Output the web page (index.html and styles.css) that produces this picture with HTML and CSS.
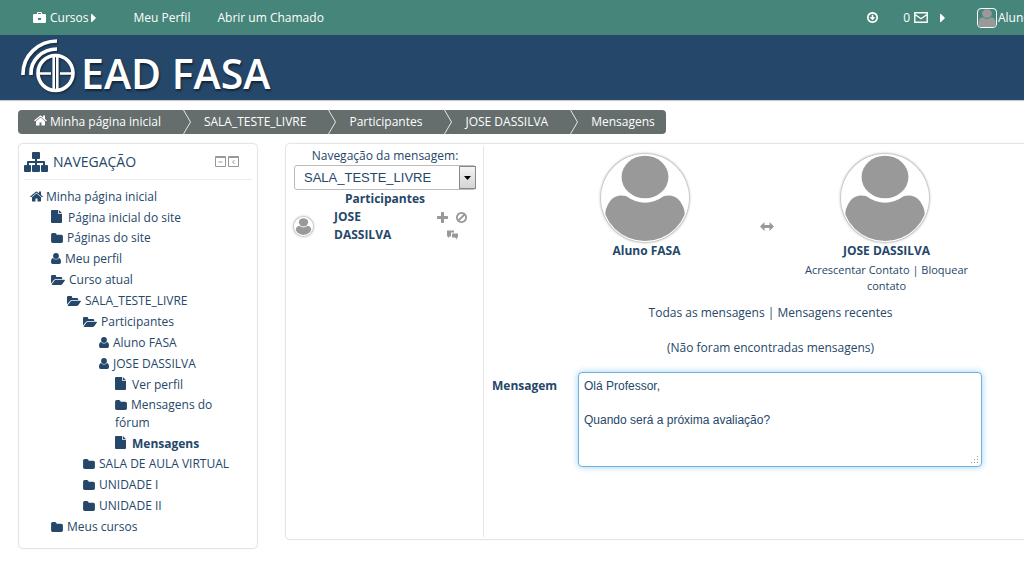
FILE: index.html
```html
<!DOCTYPE html>
<html lang="pt-BR">
<head>
<meta charset="utf-8">
<meta name="viewport" content="width=device-width, initial-scale=1">
<title>EAD FASA: Mensagens</title>
<link rel="stylesheet" href="styles.css">
</head>
<body>
<svg class="symbols" aria-hidden="true">
  <symbol id="home" viewBox="64 200 1664 1400"><path d="M1472 992v480q0 26-19 45t-45 19h-384v-384h-256v384h-384q-26 0-45-19t-19-45v-480q0-1 .5-3t.5-3l575-474 575 474q1 2 1 6zm223-69l-62 74q-8 9-21 11h-3q-13 0-21-7l-692-577-692 577q-12 8-24 7-13-2-21-11l-62-74q-8-10-7-23.5t11-21.5l719-599q32-26 76-26t76 26l244 204v-195q0-14 9-23t23-9h192q14 0 23 9t9 23v408l219 182q10 8 11 21.5t-7 23.5z"/></symbol>
  <symbol id="folder" viewBox="64 128 1664 1408"><path d="M1728 608v704q0 92-66 158t-158 66h-1216q-92 0-158-66t-66-158v-960q0-92 66-158t158-66h320q92 0 158 66t66 158v32h672q92 0 158 66t66 158z"/></symbol>
  <symbol id="folder-open" viewBox="0 0 14 10"><path d="M0 1.200Q0 0 1.200 0H4q1.200 0 1.200 1.200V2H10q1.200 0 1.200 1.200V4H5.200Q3.800 4 2.900 5L0 8.500zM5 4.800h8.400q.9.200.3 1L11.400 9q-.8 1-1.800 1H1.200q-.8-.2-.3-.9L3.500 5.600Q4.200 4.800 5 4.800z"/></symbol>
  <symbol id="file" viewBox="0 0 11 13"><path d="M1 0h6v3.200q0 .8.8.8H11v8q0 1-1 1H1q-1 0-1-1V1q0-1 1-1zM7.800 0L11 3.200H7.800z"/></symbol>
  <symbol id="user" viewBox="0 0 10 11"><ellipse cx="5" cy="3" rx="2.900" ry="3"/><path d="M2 5Q3.300 6.500 5 6.500T8 5Q10 5.400 10 9q0 2-1.700 2H1.700Q0 11 0 9 0 5.400 2 5z"/></symbol>
  <symbol id="plus" viewBox="192 128 1408 1408"><path d="M1600 736v192q0 40-28 68t-68 28h-416v416q0 40-28 68t-68 28h-192q-40 0-68-28t-28-68v-416h-416q-40 0-68-28t-28-68v-192q0-40 28-68t68-28h416v-416q0-40 28-68t68-28h192q40 0 68 28t28 68v416h416q40 0 68 28t28 68z"/></symbol>
  <symbol id="ban" viewBox="0 0 11 11"><path d="M2.500 8.500l6-6" stroke="currentColor" stroke-width="1.800"/><path d="M5.500 0a5.500 5.500 0 1 0 .01 0zM5.500 1.800a3.700 3.700 0 1 1-.01 0z" fill-rule="evenodd"/></symbol>
  <symbol id="comments" viewBox="0 0 11 10"><path d="M0 0h7v2H4v4H2.500L1 7.500V6H0zM5 3h6v4h-1v2L8 7H5z"/></symbol>
  <symbol id="swap" viewBox="0 0 14 9"><path d="M0 4.500L4.500 0v3h5V0L14 4.500 9.500 9V6h-5v3z"/></symbol>
  <symbol id="briefcase" viewBox="0 0 13 11"><path fill-rule="evenodd" d="M4 2V1q0-1 1-1h3q1 0 1 1v1h3q1 0 1 1v7q0 1-1 1H1q-1 0-1-1V3q0-1 1-1zM5 2h3V1H5zM5 6v2h3V6z"/></symbol>
  <symbol id="caret" viewBox="0 0 5 8"><path d="M0 0h1l4 4-4 4H0z"/></symbol>
  <symbol id="sitemap" viewBox="0 0 24 20"><path d="M9 0h6q1 0 1 1v5q0 1-1 1h-2v2h7q1 0 1 1v3h2q1 0 1 1v5q0 1-1 1h-5q-1 0-1-1v-5q0-1 1-1h1v-2h-6v2h2q1 0 1 1v5q0 1-1 1H9q-1 0-1-1v-5q0-1 1-1h2v-2H5v2h1q1 0 1 1v5q0 1-1 1H1q-1 0-1-1v-5q0-1 1-1h2v-3q0-1 1-1h7V7H9Q8 7 8 6V1q0-1 1-1z"/></symbol>
  <symbol id="person" viewBox="0 0 90 90"><ellipse cx="45" cy="23" rx="24.500" ry="22.300"/><path d="M25 43q20 14 40 0 15-4 21 14l4 33H0l4-33Q10 39 25 43z"/></symbol>
</svg>

<header>
  <nav class="topbar" aria-label="Principal">
    <a class="courses" href="#"><svg class="i-briefcase"><use href="#briefcase"/></svg>Cursos<svg class="i-caret"><use href="#caret"/></svg></a>
    <a href="#">Meu Perfil</a>
    <a href="#">Abrir um Chamado</a>
    <div class="tools">
      <button type="button" aria-label="Opções"><svg class="i-target" viewBox="0 0 11 11"><path d="M5.500 0a5.500 5.500 0 1 0 .01 0zM5.500 1.700a3.800 3.800 0 1 1-.01 0z" fill-rule="evenodd"/><path d="M4.700 2.800h1.600v2.400H8.500l-3 3-3-3h2.200z"/></svg></button>
      <a class="mail" href="#" aria-label="0 mensagens">0<svg class="i-mail" viewBox="0 0 14 11"><path d="M.8.800h12.400v9.400H.8zM1 2.500l6 4.200 6-4.200"/></svg><svg class="i-caret"><use href="#caret"/></svg></a>
      <a class="account" href="#"><svg class="thumb"><use href="#person"/></svg>Aluno FASA</a>
    </div>
  </nav>
  <div class="banner">
    <a class="logo" href="#" aria-label="EAD FASA">
      <svg class="emblem" viewBox="0 0 54 56">
        <path d="M2 37V36A34 33 0 0 1 36 3M10 37V36A26 24 0 0 1 36 11"/>
        <circle cx="34.500" cy="35" r="17.500"/>
        <path class="thin" d="M32.700 17v36M36.300 17v36M18 35.500h12M39 35.500h13"/>
      </svg><span>EAD FASA</span></a>
  </div>
</header>

<div class="page">
  <nav aria-label="Trilha">
    <ol class="crumbs">
      <li><a href="#"><svg class="i-home"><use href="#home"/></svg>Minha página inicial</a><svg class="chev" viewBox="0 0 8 24"><path d="M.5 0l7 12-7 12"/></svg></li>
      <li><a href="#">SALA_TESTE_LIVRE</a><svg class="chev" viewBox="0 0 8 24"><path d="M.5 0l7 12-7 12"/></svg></li>
      <li><a href="#">Participantes</a><svg class="chev" viewBox="0 0 8 24"><path d="M.5 0l7 12-7 12"/></svg></li>
      <li><a href="#">JOSE DASSILVA</a><svg class="chev" viewBox="0 0 8 24"><path d="M.5 0l7 12-7 12"/></svg></li>
      <li><a href="#">Mensagens</a></li>
    </ol>
  </nav>

  <div class="columns">
    <aside class="panel sidebar">
      <div class="side-head">
        <svg class="i-sitemap"><use href="#sitemap"/></svg>
        <h2>NAVEGAÇÃO</h2>
        <button type="button" aria-label="Ocultar bloco"><svg class="i-box" viewBox="0 0 11 11"><path d="M.5.500h10v10H.5zM.5 1.500h10M3.500 6h4"/></svg></button>
        <button type="button" aria-label="Mover para a doca"><svg class="i-box" viewBox="0 0 11 11"><path d="M.5.500h10v10H.5zM.5 1.500h10M6.500 4l-2 2 2 2"/></svg></button>
      </div>
      <ul class="tree">
        <li><a href="#"><svg class="i-home"><use href="#home"/></svg>Minha página inicial</a>
          <ul class="first">
            <li class="doc"><a href="#"><svg class="i-file"><use href="#file"/></svg>Página inicial do site</a></li>
            <li><a href="#"><svg class="i-folder"><use href="#folder"/></svg>Páginas do site</a></li>
            <li><a href="#"><svg class="i-user"><use href="#user"/></svg>Meu perfil</a></li>
            <li><a href="#"><svg class="i-open"><use href="#folder-open"/></svg>Curso atual</a>
              <ul>
                <li><a href="#"><svg class="i-open"><use href="#folder-open"/></svg>SALA_TESTE_LIVRE</a>
                  <ul>
                    <li><a href="#"><svg class="i-open"><use href="#folder-open"/></svg>Participantes</a>
                      <ul>
                        <li><a href="#"><svg class="i-user"><use href="#user"/></svg>Aluno FASA</a></li>
                        <li><a href="#"><svg class="i-user"><use href="#user"/></svg>JOSE DASSILVA</a>
                          <ul>
                            <li class="doc"><a href="#"><svg class="i-file"><use href="#file"/></svg>Ver perfil</a></li>
                            <li><a href="#"><svg class="i-folder"><use href="#folder"/></svg>Mensagens do fórum</a></li>
                            <li class="doc current"><a href="#"><svg class="i-file"><use href="#file"/></svg>Mensagens</a></li>
                          </ul>
                        </li>
                      </ul>
                    </li>
                    <li><a href="#"><svg class="i-folder"><use href="#folder"/></svg>SALA DE AULA VIRTUAL</a></li>
                    <li><a href="#"><svg class="i-folder"><use href="#folder"/></svg>UNIDADE I</a></li>
                    <li><a href="#"><svg class="i-folder"><use href="#folder"/></svg>UNIDADE II</a></li>
                  </ul>
                </li>
              </ul>
            </li>
            <li><a href="#"><svg class="i-folder"><use href="#folder"/></svg>Meus cursos</a></li>
          </ul>
        </li>
      </ul>
    </aside>

    <main class="panel messages">
      <section class="contacts">
        <label for="nav">Navegação da mensagem:</label>
        <div class="select">
          <select id="nav"><option>SALA_TESTE_LIVRE</option></select>
          <span class="drop"><svg class="i-down" viewBox="0 0 7 4"><path d="M0 0h7L3.500 4z"/></svg></span>
        </div>
        <h3>Participantes</h3>
        <div class="contact">
          <svg class="avatar small"><use href="#person"/></svg>
          <a href="#">JOSE DASSILVA</a>
          <div class="actions">
            <button type="button" aria-label="Acrescentar contato"><svg class="i-act"><use href="#plus"/></svg></button>
            <button type="button" aria-label="Bloquear contato"><svg class="i-act"><use href="#ban"/></svg></button>
            <button type="button" aria-label="Histórico"><svg class="i-act"><use href="#comments"/></svg></button>
          </div>
        </div>
      </section>

      <section class="thread">
        <div class="pair">
          <div class="person"><svg class="avatar"><use href="#person"/></svg><strong>Aluno FASA</strong></div>
          <svg class="i-swap"><use href="#swap"/></svg>
          <div class="person"><svg class="avatar"><use href="#person"/></svg><strong>JOSE DASSILVA</strong>
            <div class="links"><a href="#">Acrescentar Contato</a> | <a href="#">Bloquear contato</a></div></div>
        </div>
        <p class="filter"><a href="#">Todas as mensagens</a> | <a href="#">Mensagens recentes</a></p>
        <p class="empty">(Não foram encontradas mensagens)</p>
        <form class="compose">
          <label for="msg">Mensagem</label>
          <div class="box">
            <textarea id="msg" rows="5">Olá Professor,

Quando será a próxima avaliação?</textarea>
            <svg class="grip" viewBox="0 0 8 8"><path d="M6 0h1v1H6zM6 3h1v1H6zM3 3h1v1H3zM6 6h1v1H6zM3 6h1v1H3zM0 6h1v1H0z"/></svg>
          </div>
        </form>
      </section>
    </main>
  </div>
</div>
</body>
</html>
```

FILE: styles.css
```css
* { box-sizing: border-box; }
body {
  margin: 0;
  overflow-x: hidden;
  background: #fff;
  color: #254769;
  font: 12px/18px "Open Sans", "Noto Sans", sans-serif;
}
a { color: inherit; text-decoration: none; }
button { padding: 0; border: 0; background: none; color: inherit; display: flex; }
svg { fill: currentColor; flex: none; }
h2, h3, p, ul, ol { margin: 0; padding: 0; list-style: none; }
.symbols { display: none; }

.topbar {
  display: flex;
  align-items: center;
  gap: 27px;
  height: 35px;
  padding-left: 33px;
  background: #46857a;
  color: #fff;
  white-space: nowrap;
}
.courses { display: flex; align-items: center; margin-right: 10px; }
.tools { display: flex; align-items: center; gap: 25px; margin-left: auto; }
.mail { display: flex; align-items: center; margin-right: 7px; }
.mail .i-caret { margin-left: 12px; }
.account { display: flex; align-items: center; gap: 1px; width: 47px; overflow: hidden; }
.thumb { width: 20px; height: 20px; border: 1px solid #fff; border-radius: 4px; color: #999; }
.i-briefcase { width: 13px; height: 11px; margin-right: 4px; }
.i-caret { width: 5px; height: 8px; margin-left: 3px; }
.i-target { width: 11px; height: 11px; }
.i-mail { width: 14px; height: 11px; margin-left: 4px; fill: none; stroke: #fff; stroke-width: 1.4; }

.banner {
  height: 65px;
  padding: 3px 21px;
  background: #254769;
  box-shadow: 0 1px 1px #ccc;
}
.logo { display: inline-flex; gap: 6px; color: #fff; }
.logo span {
  font-size: 41px;
  font-weight: 600;
  line-height: 70px;
  text-shadow: 1px 2px 2px #12263a;
  white-space: nowrap;
}
.emblem { width: 54px; height: 56px; fill: none; stroke: #fff; stroke-width: 3.6; filter: drop-shadow(1px 1px 1px #12263a); }
.emblem .thin { stroke-width: 2.6; }

.page { padding: 10px 0 18px 18px; }
.crumbs {
  display: inline-flex;
  height: 24px;
  padding: 0 11px 0 16px;
  border-radius: 4px;
  background: #656e6d;
  color: #fff;
  line-height: 24px;
  vertical-align: top;
  white-space: nowrap;
}
.crumbs li { display: flex; }
.chev { width: 8px; height: 24px; margin: 0 13px 0 22px; fill: none; stroke: #e4e8e7; }
.i-home { width: 13px; height: 11px; margin-right: 3px; }

.columns {
  display: grid;
  grid-template-columns: 240px 1fr;
  align-items: start;
  gap: 27px;
  margin: 9px -34px 0 0;
}
.panel { border: 1px solid #e3e5e6; border-radius: 5px; box-shadow: 0 0 1px #ddd; }
.sidebar { padding: 4px 5px 12px; }
.side-head {
  display: flex;
  align-items: center;
  gap: 2px;
  height: 32px;
  padding: 0 13px 4px 0;
  border-bottom: 1px solid #eceeef;
}
.side-head h2 { flex: 1; margin-left: 3px; font-size: 14px; font-weight: 400; }
.i-sitemap { width: 24px; height: 20px; }
.i-box { width: 11px; height: 11px; fill: none; stroke: #999; }

.tree { padding: 5px 12px 0 6px; }
.tree li { padding-top: 3px; }
.tree ul { padding-left: 16px; }
.tree .first { padding-left: 21px; }
.tree .doc { margin-bottom: -1px; }
.tree svg { vertical-align: -1px; }
.current { font-weight: 700; }
.i-folder { width: 12px; height: 10px; margin-right: 4px; }
.i-open { width: 14px; height: 10px; margin-right: 4px; }
.i-user { width: 10px; height: 11px; margin-right: 4px; }
.i-file { width: 11px; height: 13px; margin-right: 6px; }

.messages { display: grid; grid-template-columns: 198px 1fr; min-height: 397px; padding: 2px 0; }
.contacts { padding: 1px 7px 0 8px; border-right: 1px solid #e3e5e6; text-align: center; }
.contacts label { display: block; }
.select { display: grid; grid-template-columns: 1fr 17px; }
.select select {
  grid-area: 1 / 1 / 2 / 3;
  width: 100%;
  height: 25px;
  padding: 0 9px;
  appearance: none;
  border: 1px solid #bbb;
  border-radius: 3px;
  background: #fff;
  color: #254769;
  font: 13px "Liberation Sans", Arial, sans-serif;
}
.drop {
  grid-area: 1 / 2;
  display: grid;
  place-items: center;
  margin: 1px 0;
  border: 1px solid #888;
  background: linear-gradient(#f4f4f4, #d4d4d4);
  color: #000;
  pointer-events: none;
}
.i-down { width: 7px; height: 4px; }
.contacts h3 { font-size: 12px; font-weight: 700; }
.contact {
  display: grid;
  grid-template-columns: 20px 80px 36px;
  align-items: center;
  gap: 20px;
  text-align: left;
}
.contact a { max-width: 70px; font-weight: 700; }
.actions { display: flex; flex-wrap: wrap; justify-content: center; gap: 7px 8px; color: #999; }
.i-act { width: 11px; height: 11px; }
.avatar {
  display: block;
  width: 88px;
  height: 88px;
  margin-right: 4px;
  border: 1px solid #fff;
  border-radius: 50%;
  box-shadow: 0 0 3px #666;
  color: #999;
}
.avatar.small { width: 19px; height: 19px; }

.thread { padding: 8px; text-align: center; }
.pair { display: flex; justify-content: center; gap: 18px; padding-right: 8px; }
.person { display: grid; justify-items: center; align-content: start; width: 190px; }
.person strong { font-weight: 700; }
.links { width: 180px; font-size: 11px; line-height: 16px; padding-top: 2px; }
.i-swap { width: 14px; height: 9px; margin-top: 68px; color: #999; }
.filter { padding-top: 10px; }
.empty { padding-top: 17px; }
.compose { display: flex; gap: 21px; padding-top: 15px; }
.compose label { width: 65px; padding-top: 5px; font-weight: 700; text-align: left; }
.box { display: grid; flex: 0 0 404px; }
.box textarea {
  grid-area: 1 / 1;
  width: 100%;
  height: 95px;
  padding: 5px;
  resize: none;
  border: 1px solid #6fb0dc;
  border-radius: 4px;
  outline: 0;
  box-shadow: 0 0 7px #9fd2f5;
  color: #254769;
  font: 12px/17px "Liberation Sans", Arial, sans-serif;
}
.grip { grid-area: 1 / 1; place-self: end; width: 8px; height: 8px; margin: 3px; color: #999; z-index: 1; }
```
